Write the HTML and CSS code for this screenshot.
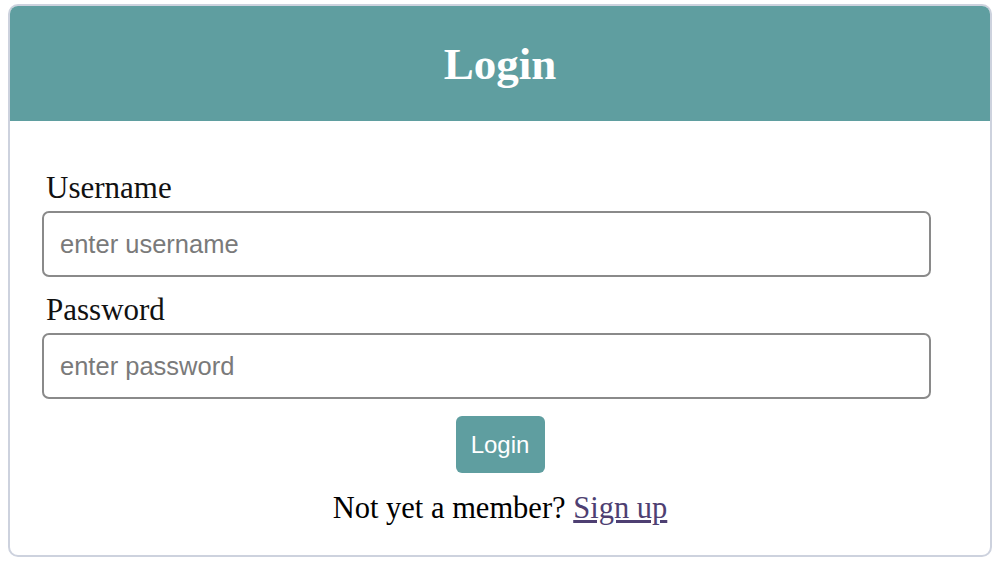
FILE: index.html
```html
<!DOCTYPE html>
<html lang="en">
<head>
    <meta charset="UTF-8">
    <meta name="viewport" content="width=device-width, initial-scale=1.0">
    <title>Login</title>
    <link rel="stylesheet" href="styles.css">
</head>
<body>

    <!-- Login card -->
    <div class="login-card">
        <div class="login-header">
            <h1>Login</h1>
        </div>

        <form class="login-form">
            <label for="username">Username</label>
            <input type="text" id="username" placeholder="enter username">

            <label for="password">Password</label>
            <input type="password" id="password" placeholder="enter password">

            <div class="actions">
                <button type="submit" class="login-btn">Login</button>
                <p class="signup">Not yet a member? <a href="#">Sign up</a></p>
            </div>
        </form>
    </div>

</body>
</html>
```
FILE: styles.css
```css
body {
    font-family: "Liberation Serif", "Times New Roman", serif;
    background-color: #ffffff;
    margin: 4px 8px;
}

/* Card */
.login-card {
    height: 553px;
    box-sizing: border-box;
    border: 2px solid #cdd2de;
    border-radius: 10px;
    overflow: hidden;
    display: flex;
    flex-direction: column;
}

.login-header {
    background-color: #5f9ea0;
    height: 115px;
    display: flex;
    justify-content: center;
    align-items: center;
}

.login-header h1 {
    margin: 0;
    color: white;
    font-size: 45px;
    font-weight: bold;
}

/* Form */
.login-form {
    display: flex;
    flex-direction: column;
    padding: 50px 32px 0;
}

.login-form label {
    font-size: 31px;
    color: #111;
    padding-left: 4px;
    line-height: 34px;
    margin-bottom: 6px;
}

.login-form input {
    align-self: flex-start;
    width: 889px;
    font-family: "Liberation Sans", Arial, sans-serif;
    font-size: 25.5px;
    height: 66px;
    box-sizing: border-box;
    border: 2px solid #8a8a8a;
    border-radius: 7px;
    padding: 0 16px;
    margin-bottom: 16px;
}

.login-form input::placeholder {
    color: #7a7a7a;
}

.login-form input:last-of-type {
    margin-bottom: 17px;
}

.actions {
    display: flex;
    flex-direction: column;
    align-items: center;
}

.login-btn {
    font-family: "Liberation Sans", Arial, sans-serif;
    font-size: 24px;
    color: white;
    background-color: #5f9ea0;
    border: none;
    border-radius: 6px;
    width: 89px;
    height: 57px;
    cursor: pointer;
}

.signup {
    margin: 18px 0 0;
    font-size: 30.5px;
}

.signup a {
    color: #4e3f72;
}
```
